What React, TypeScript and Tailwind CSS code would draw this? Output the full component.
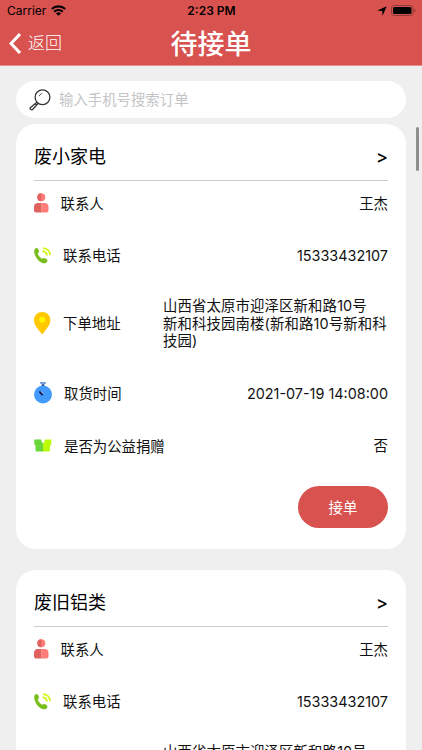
import type { ReactNode } from "react";

const orders = [
  { id: 1, title: "废小家电" },
  { id: 2, title: "废旧铝类" },
];

const details = {
  contact: "王杰",
  phone: "15333432107",
  address: ["山西省太原市迎泽区新和路10号", "新和科技园南楼(新和路10号新和科", "技园)"],
  time: "2021-07-19 14:08:00",
  donation: "否",
};

function PersonIcon() {
  return (
    <svg className="w-[14.5px] h-5 shrink-0" viewBox="0 0 14.5 20">
      <circle cx="7.3" cy="4.2" r="4" fill="#ff7c78" />
      <path d="M7.3.2a4 4 0 0 0 0 8z" fill="#e0625f" />
      <path d="M7.3 10h3.200q4 0 4 4v3.500q0 2-2 2H7.300z" fill="#ff7c78" />
      <path d="M7.300 10H4Q0 10 0 14v3.500q0 2 2 2h5.300z" fill="#e0625f" />
    </svg>
  );
}

function PhoneIcon() {
  return (
    <svg className="w-[17px] h-[17px] shrink-0" viewBox="0 0 17 17">
      <path
        d="M1 1.800C2.500.4 3.800 1 4.600 3c.8 1.800.2 2.600-.9 3.500.8 2.300 2.200 4 4.400 5.300 1.200-1 2.300-1.200 3.700-.2 2 1.400 2.200 2.600.7 3.800-2.100 1.700-5.200.8-8-2C1.500 10.600-1.300 4.400 1 1.800z"
        fill="#7abe1c"
      />
      <path d="M9.800 1.200c3.300.2 5.900 2.900 6.100 6.200M9.200 4.400c2 .1 3.300 1.400 3.700 3.400" fill="none" stroke="#d4f51f" strokeWidth="1.900" strokeLinecap="round" />
    </svg>
  );
}

function PinIcon() {
  return (
    <svg className="w-[17px] h-[23px] shrink-0" viewBox="0 0 17 23">
      <path d="M8.200 0C3.700 0 0 3.500 0 8c0 5.500 4.700 9.500 8.200 14.500C11.700 17.500 16.400 13.500 16.400 8c0-4.500-3.700-8-8.200-8z" fill="#ffc800" />
      <circle cx="8.200" cy="7.700" r="2.900" fill="#fff600" />
    </svg>
  );
}

function TimerIcon() {
  return (
    <svg className="w-[18px] h-[22px] shrink-0" viewBox="0 0 18 22">
      <path d="M6.200 1h5.600" stroke="#4a80c8" strokeWidth="1.500" />
      <path d="M7.700 2.200h2.600v2H7.700z" fill="#173f83" />
      <circle cx="9" cy="12.500" r="9" fill="#429bfc" />
      <path d="M5.500 9.300l3.300 3.800" stroke="#100f4e" strokeWidth="2" />
      <path d="M6.700 9l2.800 3.200" stroke="#fff" strokeWidth=".6" />
    </svg>
  );
}

function DonateIcon() {
  return (
    <svg className="w-[18px] h-[13px] shrink-0" viewBox="0 0 18 13">
      <path d="M.3.500h6.700L8 3.200l1 1v8.300H3Q1.500 12.500 1.500 11V6.500L.3 5.500z" fill="#6bd63c" />
      <path d="M9 4.200l1-.7 1-3h6.300v5L16 6.800V11q0 1.500-1.500 1.500H9z" fill="#bcfb09" />
    </svg>
  );
}

function Row({ icon, label, className, children }: { icon: ReactNode; label: string; className: string; children: ReactNode }) {
  return (
    <div className={`flex items-center justify-between ${className}`}>
      <div className="flex items-center gap-3">
        {icon}
        <span className="pt-0.5 whitespace-nowrap">{label}</span>
      </div>
      <div className="pt-px">{children}</div>
    </div>
  );
}

function OrderCard({ title }: { title: string }) {
  return (
    <div className="h-[425px] shrink-0 rounded-[20px] bg-white px-[18px] text-[14.400px] leading-[17.500px] text-[#111]">
      <div className="flex h-[57px] items-center justify-between border-b border-[#ccc] pt-[9px] text-[18px] text-black">
        <h2>{title}</h2>
        <span className="font-medium">&gt;</span>
      </div>
      <Row icon={<PersonIcon />} label="联系人" className="h-11">
        <span>{details.contact}</span>
      </Row>
      <Row icon={<PhoneIcon />} label="联系电话" className="h-[60px]">
        <span>{details.phone}</span>
      </Row>
      <Row icon={<PinIcon />} label="下单地址" className="h-[76px]">
        <div className="w-[225px] tracking-[0.12px] whitespace-nowrap">
          {details.address.map((line) => (
            <p key={line}>{line}</p>
          ))}
        </div>
      </Row>
      <Row icon={<TimerIcon />} label="取货时间" className="h-16">
        <span>{details.time}</span>
      </Row>
      <Row icon={<DonateIcon />} label="是否为公益捐赠" className="h-[41px]">
        <span>{details.donation}</span>
      </Row>
      <div className="flex justify-end pt-5">
        <button className="h-[42px] w-[90px] rounded-full bg-[#d8524f] pt-0.5 text-white">接单</button>
      </div>
    </div>
  );
}

function StatusBar() {
  return (
    <div className="grid h-[21px] grid-cols-3 items-center pl-[7px] pr-[6px] text-[12px] text-black">
      <div className="flex items-center gap-[5px]">
        <span>Carrier</span>
        <svg className="h-[11px] w-[15px]" viewBox="0 0 15 11">
          <path d="M.8 4.100a9.700 9.700 0 0 1 13.400 0M3.200 6.800a6.200 6.200 0 0 1 8.600 0" fill="none" stroke="#000" strokeWidth="2.100" />
          <path d="M7.500 10.800L5 8.500a3.600 3.600 0 0 1 5 0z" />
        </svg>
      </div>
      <span className="text-center font-semibold">2:23 PM</span>
      <div className="flex items-center justify-end gap-1">
        <svg className="h-[10px] w-[10px]" viewBox="0 0 10 10">
          <path d="M9.700.3L5.600 9.700 5.200 5 .3 4.600z" />
        </svg>
        <svg className="h-[11px] w-[25px]" viewBox="0 0 25 11">
          <rect x=".5" y=".5" width="21.500" height="10" rx="2.800" fill="none" stroke="#8f3a38" />
          <rect x="2" y="2" width="18.500" height="7" rx="1.500" />
          <path d="M23.300 3.700q1.300.6 1.300 1.800t-1.300 1.800z" fill="#8f3a38" />
        </svg>
      </div>
    </div>
  );
}

export default function App() {
  return (
    <div className="relative flex h-[750px] w-[422px] flex-col overflow-hidden bg-[#efefef] font-[Inter,'Noto_Sans_CJK_SC',sans-serif]">
      <header className="h-[66px] shrink-0 border-b border-[#e58f8d] bg-[#d8524f] text-white">
        <StatusBar />
        <div className="grid h-11 grid-cols-3 items-center">
          <div className="flex items-center gap-[7px] pl-[9px]">
            <svg className="h-[21px] w-3" viewBox="0 0 12 21">
              <path d="M11 1L2 10.500 11 20" fill="none" stroke="#fff" strokeWidth="3" />
            </svg>
            <span className="pt-0.5 text-[17px] font-light">返回</span>
          </div>
          <h1 className="pt-0.5 text-center text-[27px] leading-none font-medium">待接单</h1>
        </div>
      </header>

      <main className="flex flex-col px-4 pt-[15px]">
        <div className="flex h-[37px] shrink-0 items-center gap-2 rounded-full bg-white pl-[13px]">
          <svg className="h-[22px] w-[22px]" viewBox="0 0 22 22" fill="none" stroke="#333" strokeWidth="1.300">
            <circle cx="13.500" cy="8.200" r="7.400" />
            <path d="M7.900 13.200L1.600 18.400c-1.300 1.300.6 3.300 2 2.100l5.700-6.200M6 14.800l1.500 1.500" />
            <path d="M10 7.200q.9-2.300 3.200-2.800" strokeWidth=".8" />
          </svg>
          <span className="pt-px text-[14.400px] text-[#c4c4c6]">输入手机号搜索订单</span>
        </div>
        <div className="mt-[6px] flex flex-col gap-[21px]">
          {orders.map((order) => (
            <OrderCard key={order.id} title={order.title} />
          ))}
        </div>
      </main>

      <div className="absolute top-[127px] right-[3px] h-11 w-[3px] rounded-full bg-[#8e8e8e]" />
    </div>
  );
}
